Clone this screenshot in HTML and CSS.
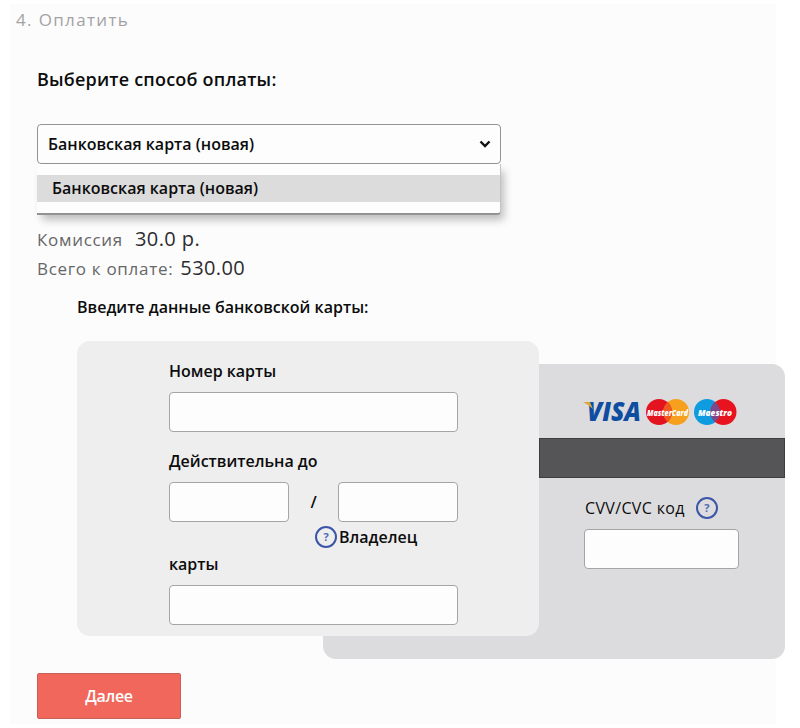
FILE: index.html
```html
<!DOCTYPE html>
<html lang="ru">

<head>
    <meta charset="UTF-8">
    <meta name="viewport" content="width=device-width, initial-scale=1.0">
    <title>Оплатить</title>
    <link rel="stylesheet" href="styles.css">
</head>

<body>
    <div class="page">
        <h1><span class="num">4.</span> Оплатить</h1>
        <h2>Выберите способ оплаты:</h2>
        <div class="select">
            <div class="select-value">
                <span>Банковская карта (новая)</span>
                <svg class="arrow" width="12" height="8" viewBox="0 0 12 8">
                    <path d="M1.5 1.5 L6 6 L10.5 1.5" fill="none" stroke="#111" stroke-width="2.4" />
                </svg>
            </div>
            <ul class="options">
                <li>Банковская карта (новая)</li>
            </ul>
        </div>
        <p class="sum fee"><span>Комиссия</span><b>30.0 р.</b></p>
        <p class="sum total"><span>Всего к оплате:</span><b>530.00</b></p>
        <h3>Введите данные банковской карты:</h3>

        <form class="cards">
            <!-- обратная сторона -->
            <div class="card back">
                <div class="logos">
                    <svg width="156" height="30" viewBox="0 0 156 30">
                        <text class="visa" x="2" y="24" textLength="54" lengthAdjust="spacingAndGlyphs">VISA</text>
                        <path d="M-2 5 H5 L8 12 Q4 8 -2 5z" fill="#d9a53c" />
                        <circle cx="91" cy="15" r="13" fill="#f6a01e" />
                        <circle cx="74" cy="15" r="13" fill="#e3131f" />
                        <path d="M82.5 5.2 A13 13 0 0 1 82.5 24.8 A13 13 0 0 1 82.5 5.2z" fill="#ee5a22" />
                        <text class="brand" x="62" y="18.5" textLength="41" lengthAdjust="spacingAndGlyphs">MasterCard</text>
                        <circle cx="122" cy="15" r="13" fill="#0f9be0" />
                        <circle cx="138.5" cy="15" r="13" fill="#e8131f" />
                        <path d="M130.2 4.9 A13 13 0 0 1 130.2 25.1 A13 13 0 0 1 130.2 4.9z" fill="#7a4a8c" />
                        <text class="brand" x="113" y="18.5" textLength="34" lengthAdjust="spacingAndGlyphs">Maestro</text>
                    </svg>
                </div>
                <div class="stripe"></div>
                <div class="cvv">
                    <label for="cvv">CVV/CVC код</label>
                    <span class="help">?</span>
                </div>
                <input id="cvv" class="input" type="text">
            </div>
            <!-- лицевая сторона -->
            <div class="card front">
                <label class="l-number" for="number">Номер карты</label>
                <input id="number" class="input" type="text">
                <label class="l-date" for="month">Действительна до</label>
                <div class="date">
                    <input id="month" class="input" type="text">
                    <span>/</span>
                    <input class="input" type="text">
                </div>
                <label class="owner" for="owner"><span class="help">?</span><span class="l-owner">Владелец</span></label>
                <label class="l-card" for="owner">карты</label>
                <input id="owner" class="input" type="text">
            </div>
        </form>

        <button class="next" type="button">Далее</button>
    </div>
</body>

</html>
```
FILE: styles.css
```css
* {
    margin: 0;
    padding: 0;
    box-sizing: border-box;
}

body {
    height: 728px;
    background-color: #fff;
    font-family: "Open Sans", "Noto Sans", sans-serif;
    font-size: 16px;
    font-weight: 500;
    color: #0c0c0c;
    overflow: hidden;
}

ul {
    list-style: none;
}

.page {
    width: 766px;
    height: 720px;
    margin: 4px 0 0 10px;
    padding: 4px 0 0 27px;
    background-color: #fcfcfd;
}

h1 {
    margin-left: -21px;
    height: 24px;
    line-height: 24px;
    font-size: 17px;
    font-weight: 400;
    letter-spacing: 1.35px;
    color: #a3a3a3;
}

h2 {
    margin-top: 35px;
    height: 24px;
    line-height: 24px;
    font-size: 18px;
    font-weight: 600;
    letter-spacing: .2px;
}

.select {
    width: 464px;
    margin-top: 33px;
}

.select-value {
    display: flex;
    justify-content: space-between;
    align-items: center;
    height: 40px;
    padding: 0 9px 0 10px;
    border: 1px solid #949496;
    border-radius: 4px;
    background-color: #fdfdfe;
    font-weight: 600;
}

.options {
    height: 51px;
    padding: 11px 0;
    border-bottom: 2px solid #929294;
    border-right: 1px solid #c4c4c6;
    border-radius: 0 0 4px 0;
    background-color: #fdfdfe;
    box-shadow: 4px 6px 8px -1px rgba(0, 0, 0, .25);
}

.options li {
    height: 27px;
    padding-left: 15px;
    line-height: 27px;
    font-weight: 600;
    background-color: #dcdcdd;
}

.sum {
    display: flex;
    align-items: baseline;
    height: 29px;
    line-height: 29px;
    font-size: 17px;
    font-weight: 400;
    letter-spacing: .7px;
    color: #666;
}

.sum b {
    font-size: 20px;
    font-weight: 400;
    letter-spacing: .4px;
    color: #2c2c2e;
}

.fee {
    margin-top: 9px;
    gap: 12px;
}

.total {
    gap: 7px;
}

h3 {
    margin: 14px 0 0 40px;
    height: 22px;
    line-height: 22px;
    font-size: 16px;
    font-weight: 600;
}

/* карты лежат в одной ячейке, лицевая поверх обратной */
.cards {
    display: grid;
    width: 708px;
    height: 318px;
    margin: 23px 0 0 40px;
}

.card {
    grid-area: 1 / 1;
    width: 462px;
    height: 295px;
    border-radius: 13px;
}

.back {
    margin: 23px 0 0 246px;
    padding-left: 216px;
    background-color: #dcdcde;
}

.front {
    padding: 19px 0 0 92px;
    background-color: #eeeeef;
}

.card label {
    display: block;
    height: 22px;
    line-height: 22px;
    font-weight: 600;
}

.input {
    display: block;
    width: 289px;
    height: 40px;
    border: 1px solid #a5a5a8;
    border-radius: 4px;
    background-color: #fdfdfe;
}

.logos {
    height: 74px;
    padding: 33px 0 0 46px;
}

.logos svg {
    display: block;
    overflow: visible;
}

.visa {
    font-size: 26px;
    font-weight: 800;
    font-style: italic;
    fill: #0e4da1;
}

.brand {
    font-size: 9px;
    font-weight: 800;
    font-style: italic;
    fill: #fff;
}

.stripe {
    height: 40px;
    background-color: #555456;
    border: 1px solid #3d3c3e;
}

.cvv {
    display: flex;
    align-items: center;
    gap: 11px;
    margin: 18px 0 0 46px;
    height: 24px;
}

.card .cvv label {
    font-weight: 500;
    letter-spacing: .35px;
}

.back .input {
    width: 155px;
    margin: 9px 0 0 45px;
}

.help {
    display: block;
    width: 22px;
    height: 22px;
    border: 2px solid #3c55a8;
    border-radius: 50%;
    line-height: 18px;
    text-align: center;
    font-size: 11px;
    font-weight: 700;
    color: #4c69b8;
}

.front .input {
    margin-top: 10px;
}

.front .l-date {
    margin-top: 18px;
}

.date {
    display: flex;
    align-items: center;
    justify-content: space-between;
    width: 289px;
}

.date .input {
    width: 120px;
}

.date span {
    padding-top: 10px;
    font-weight: 600;
}

.front .owner {
    display: flex;
    gap: 2px;
    margin: 4px 0 0 146px;
}

.front .l-card {
    margin-top: 5px;
}

.front .l-card + .input {
    margin-top: 10px;
}

.next {
    display: block;
    width: 144px;
    height: 46px;
    margin-top: 14px;
    border: 1px solid #c95f57;
    border-radius: 2px;
    background-color: #f1675c;
    font: 600 16px "Open Sans", sans-serif;
    letter-spacing: -.3px;
    color: #fff;
}
```
